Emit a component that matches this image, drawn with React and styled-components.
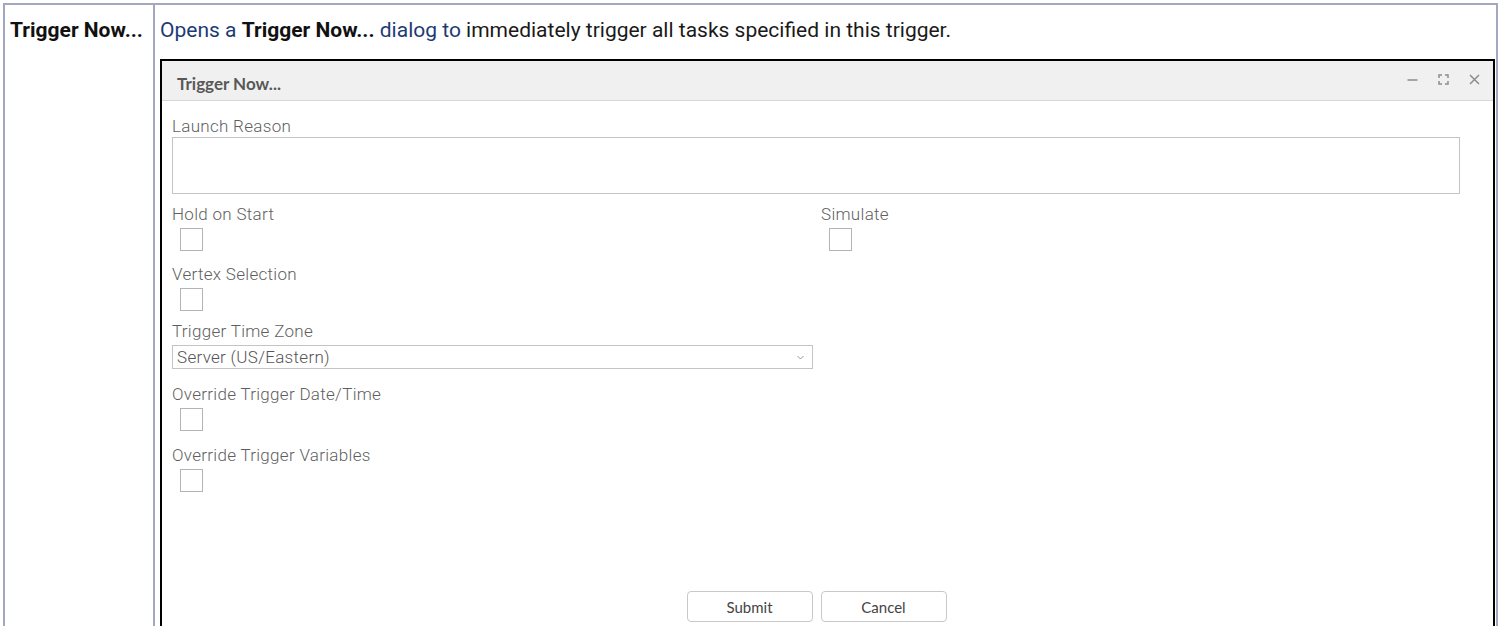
import React from 'react';
import styled, { createGlobalStyle } from 'styled-components';

const GlobalStyle = createGlobalStyle`
  html, body {
    margin: 0;
    padding: 0;
    background: #ffffff;
  }
  body {
    font-family: Roboto, "Liberation Sans", Arial, sans-serif;
    overflow: hidden;
  }
`;

const Page = styled.div`
  height: 626px;
  box-sizing: border-box;
  padding: 3px 3px 0 3px;
  overflow: hidden;
`;

/* Two-column reference table: term on the left, description on the right */
const RefTable = styled.div`
  display: grid;
  grid-template-columns: 150px 1fr;
  border: 2px solid #a5a7c0;
  border-bottom: none;
  min-height: 700px;
`;

const TermCell = styled.div`
  border-right: 2px solid #a5a7c0;
  padding: 12px 2px 0 5px;
  font-size: 21px;
  line-height: 26px;
  font-weight: 700;
  color: #111;
  white-space: nowrap;
`;

const DescCell = styled.div`
  padding: 12px 1px 0 5px;
  font-size: 21px;
  line-height: 26px;
  color: #1a1a1a;
  white-space: nowrap;
`;

const LinkText = styled.span`
  color: #1d3b74;
`;

const Strong = styled.strong`
  font-weight: 700;
  color: #111;
`;

/* Dialog window */
const Dialog = styled.div`
  margin-top: 16px;
  border: 2px solid #000;
  border-bottom: none;
  background: #fff;
  min-height: 600px;
  white-space: normal;
`;

const DialogHeader = styled.div`
  height: 39px;
  display: flex;
  align-items: center;
  justify-content: space-between;
  background: #f0f0f0;
  border-bottom: 1px solid #d6d6d6;
  padding: 0 13px 0 15px;
`;

const DialogTitle = styled.div`
  font-family: Lato, "Open Sans", sans-serif;
  font-weight: 700;
  font-size: 17px;
  color: #585858;
  padding-top: 6px;
`;

const WindowButtons = styled.div`
  display: flex;
  align-items: center;
  gap: 20px;
  margin-top: -2px;
`;

const WinIcon = styled.svg`
  width: 11px;
  height: 11px;
  display: block;
  stroke: #8c8c8c;
  fill: none;
  stroke-width: 1.5;
`;

const DialogBody = styled.div`
  padding: 15px 24px 0 10px;
  font-family: Roboto, sans-serif;
  font-weight: 300;
  color: #5c5c5c;
`;

const FieldLabel = styled.div`
  font-size: 17px;
  line-height: 20px;
  letter-spacing: 0.3px;
  color: #5f5f5f;
  white-space: nowrap;
`;

const TextArea = styled.div`
  margin-top: 1px;
  width: 1288px;
  height: 57px;
  border: 1px solid #c4c4c4;
  box-sizing: border-box;
`;

const TwoCol = styled.div`
  display: grid;
  grid-template-columns: 649px 1fr;
`;

const Field = styled.div`
  padding-top: ${p => p.$top || 0}px;
`;

const CheckBox = styled.div`
  margin: 4px 0 0 8px;
  width: 23px;
  height: 23px;
  border: 1px solid #b4b4b4;
  box-sizing: border-box;
  background: #fff;
`;

const SelectBox = styled.div`
  margin-top: 4px;
  width: 641px;
  height: 24px;
  border: 1px solid #c4c4c4;
  box-sizing: border-box;
  display: flex;
  align-items: center;
  justify-content: space-between;
  padding: 0 8px 0 4px;
  font-size: 17px;
  letter-spacing: 0.3px;
  color: #555;
`;

const Chevron = styled.svg`
  width: 7px;
  height: 5px;
  stroke: #9a9a9a;
  fill: none;
  stroke-width: 1;
`;

const ButtonRow = styled.div`
  display: flex;
  justify-content: center;
  gap: 8px;
  padding-top: 99px;
  margin-left: -8px;
`;

const Button = styled.button`
  width: 126px;
  height: 31px;
  border: 1px solid #c8c8c8;
  border-radius: 4px;
  background: #fff;
  font-family: Lato, "Open Sans", sans-serif;
  font-size: 15px;
  color: #444;
  padding: 0;
`;

function Check({ label, top }) {
  return (
    <Field $top={top}>
      <FieldLabel>{label}</FieldLabel>
      <CheckBox />
    </Field>
  );
}

export default function App() {
  return (
    <>
      <GlobalStyle />
      <Page>
        <RefTable>
          <TermCell>Trigger Now...</TermCell>
          <DescCell>
            <LinkText>Opens a </LinkText>
            <Strong>Trigger Now...</Strong>
            <LinkText> dialog to</LinkText> immediately trigger all tasks specified in this trigger.
            <Dialog>
              <DialogHeader>
                <DialogTitle>Trigger Now...</DialogTitle>
                <WindowButtons>
                  <WinIcon viewBox="0 0 11 11">
                    <path d="M0.5 6h10" />
                  </WinIcon>
                  <WinIcon viewBox="0 0 11 11">
                    <path d="M1 4V1h3M7 1h3v3M10 7v3H7M4 10H1V7" />
                  </WinIcon>
                  <WinIcon viewBox="0 0 11 11">
                    <path d="M1 1l9 9M10 1l-9 9" />
                  </WinIcon>
                </WindowButtons>
              </DialogHeader>
              <DialogBody>
                <FieldLabel>Launch Reason</FieldLabel>
                <TextArea />
                <TwoCol>
                  <Check label="Hold on Start" top={10} />
                  <Check label="Simulate" top={10} />
                </TwoCol>
                <Check label="Vertex Selection" top={13} />
                <Field $top={10}>
                  <FieldLabel>Trigger Time Zone</FieldLabel>
                  <SelectBox>
                    <span>Server (US/Eastern)</span>
                    <Chevron viewBox="0 0 7 5">
                      <path d="M0.5 1l3 3 3-3" />
                    </Chevron>
                  </SelectBox>
                </Field>
                <Check label="Override Trigger Date/Time" top={15} />
                <Check label="Override Trigger Variables" top={14} />
                <ButtonRow>
                  <Button>Submit</Button>
                  <Button>Cancel</Button>
                </ButtonRow>
              </DialogBody>
            </Dialog>
          </DescCell>
        </RefTable>
      </Page>
    </>
  );
}
